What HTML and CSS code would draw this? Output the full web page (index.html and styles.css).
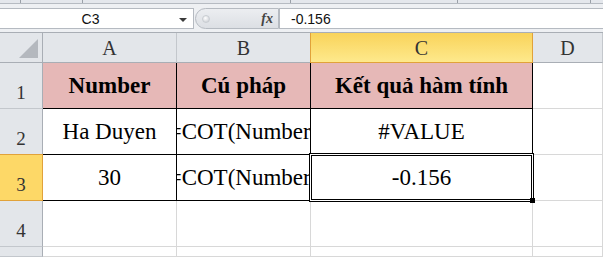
FILE: index.html
```html
<!DOCTYPE html>
<html lang="vi">
<head>
    <meta charset="UTF-8">
    <title>COT</title>
    <link rel="stylesheet" href="styles.css">
</head>
<body>
    <div class="ribbon-edge">
        <span class="tick t1"></span>
        <span class="tick t2"></span>
        <span class="tick t3"></span>
        <span class="tick t4"></span>
        <span class="tick t5"></span>
    </div>

    <div class="formula-bar">
        <div class="name-box">
            <span class="name">C3</span>
            <span class="arrow"></span>
        </div>
        <div class="fx-area">
            <span class="knob"></span>
            <span class="fx"><i>f</i>x</span>
        </div>
        <div class="formula-input">-0.156</div>
    </div>

    <div class="sheet">
        <div class="corner"><span class="tri"></span></div>
        <div class="col-head">A</div>
        <div class="col-head">B</div>
        <div class="col-head active">C</div>
        <div class="col-head">D</div>

        <div class="row-head">1</div>
        <div class="cell th">Number</div>
        <div class="cell th">Cú pháp</div>
        <div class="cell th">Kết quả hàm tính</div>
        <div class="cell empty"></div>

        <div class="row-head">2</div>
        <div class="cell">Ha Duyen</div>
        <div class="cell">=COT(Number)</div>
        <div class="cell">#VALUE</div>
        <div class="cell empty"></div>

        <div class="row-head active">3</div>
        <div class="cell">30</div>
        <div class="cell">=COT(Number)</div>
        <div class="cell">-0.156</div>
        <div class="cell empty"></div>

        <div class="row-head">4</div>
        <div class="cell empty"></div>
        <div class="cell empty"></div>
        <div class="cell empty"></div>
        <div class="cell empty"></div>

        <div class="row-head"></div>
        <div class="cell empty"></div>
        <div class="cell empty"></div>
        <div class="cell empty"></div>
        <div class="cell empty"></div>

        <div class="selection"><span class="handle"></span></div>
    </div>
</body>
</html>
```

FILE: styles.css
```css
* {
    box-sizing: border-box;
    margin: 0;
    padding: 0;
}

body {
    width: 603px;
    height: 257px;
    overflow: hidden;
    background: #fff;
    font-family: "Liberation Serif", "DejaVu Serif", "Times New Roman", serif;
}

/* strip of the ribbon that is cut off at the top */
.ribbon-edge {
    position: relative;
    height: 4px;
    background: #e4e7ec;
    border-bottom: 1px solid #b6bbc2;
}

.tick {
    position: absolute;
    top: 0;
    width: 1px;
    height: 3px;
    background: #9aa0a8;
}

.t1 { left: 20px; }
.t2 { left: 82px; }
.t3 { left: 290px; }
.t4 { left: 457px; }
.t5 { left: 590px; }

.formula-bar {
    display: flex;
    height: 29px;
    padding: 4px 0 3px;
    background: #eef0f3;
    border-bottom: 1px solid #a9aeb5;
    font-family: "Liberation Sans", Arial, sans-serif;
    font-size: 14px;
    color: #111;
}

.name-box {
    position: relative;
    width: 194px;
    display: flex;
    align-items: center;
    justify-content: center;
    background: #fff;
    border: 1px solid #b5bac1;
    border-left: none;
}

.name {
    margin-left: -12px;
}

.arrow {
    position: absolute;
    right: 6px;
    top: 9px;
    border-left: 4px solid transparent;
    border-right: 4px solid transparent;
    border-top: 4px solid #3a3a3a;
}

.fx-area {
    position: relative;
    width: 84px;
    display: flex;
    align-items: center;
    justify-content: flex-end;
    padding-right: 5px;
    margin-left: 1px;
    background: linear-gradient(#eceef1, #dcdfe4);
    border: 1px solid #b5bac1;
    border-radius: 11px 0 0 11px;
}

.knob {
    position: absolute;
    left: 6px;
    top: 6px;
    width: 8px;
    height: 8px;
    border-radius: 50%;
    background: radial-gradient(circle at 40% 35%, #fff, #c4c8ce);
    border: 1px solid #c9cdd2;
}

.fx {
    font-family: "Liberation Serif", "DejaVu Serif", serif;
    font-style: italic;
    font-weight: bold;
    font-size: 14px;
    color: #444;
}

.formula-input {
    flex: 1;
    display: flex;
    align-items: center;
    padding-left: 11px;
    background: #fff;
    border: 1px solid #b5bac1;
    border-right: none;
}

.sheet {
    position: relative;
    display: grid;
    grid-template-columns: 43px 134px 134px 222px 1fr;
    grid-template-rows: 30px 46px 46px 46px 46px 10px;
}

.corner {
    position: relative;
    background: #e3e6ea;
    border-right: 1px solid #a9aeb5;
    border-bottom: 1px solid #a9aeb5;
}

.tri {
    position: absolute;
    right: 4px;
    bottom: 4px;
    border-left: 19px solid transparent;
    border-bottom: 19px solid #b4b8be;
}

.col-head {
    display: flex;
    align-items: center;
    justify-content: center;
    padding-top: 2px;
    background: #e3e6ea;
    border-right: 1px solid #c3c7cc;
    border-bottom: 1px solid #a9aeb5;
    font-size: 20px;
    color: #333;
}

.col-head.active {
    background: linear-gradient(#f9d35a, #fee98c);
    border-left: 1px solid #e1a23a;
    border-right: 1px solid #e1a23a;
    border-bottom: 1px solid #e1a23a;
    margin-left: -1px;
}

.row-head {
    display: flex;
    align-items: flex-end;
    justify-content: center;
    padding-bottom: 4px;
    background: #e3e6ea;
    border-right: 1px solid #a9aeb5;
    border-bottom: 1px solid #c3c7cc;
    font-size: 19px;
    color: #333;
}

.row-head.active {
    background: #fdd867;
    border-right: 1px solid #e1a23a;
    border-bottom: 1px solid #e1a23a;
    margin-top: -1px;
    border-top: 1px solid #e1a23a;
}

.cell {
    display: flex;
    align-items: center;
    justify-content: center;
    overflow: hidden;
    white-space: nowrap;
    border-right: 1px solid #000;
    border-bottom: 1px solid #000;
    font-size: 23px;
    color: #000;
}

.cell.th {
    background: #e6b8b7;
    font-weight: bold;
}

.cell.empty {
    border-right: 1px solid #d8d8d8;
    border-bottom: 1px solid #d8d8d8;
}

.selection {
    position: absolute;
    left: 309px;
    top: 120px;
    width: 225px;
    height: 49px;
    border: 1px solid #000;
    box-shadow: inset 0 0 0 1px #fff, inset 0 0 0 2px #000;
}

.handle {
    position: absolute;
    right: -2px;
    bottom: -2px;
    width: 5px;
    height: 5px;
    background: #000;
}
```
